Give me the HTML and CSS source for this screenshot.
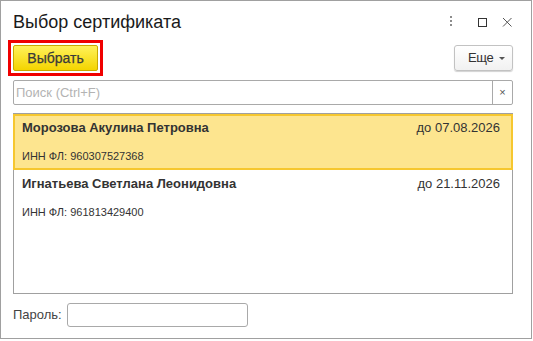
FILE: index.html
```html
<!DOCTYPE html>
<html lang="ru">
<head>
<meta charset="utf-8">
<title>Выбор сертификата</title>
<link rel="stylesheet" href="styles.css">
</head>
<body>
<div class="window">
  <div class="header">
    <h1 class="title">Выбор сертификата</h1>
    <div class="win-controls">
      <svg class="ic ic-dots" width="12" height="12" viewBox="0 0 12 12"><rect x="5" y="0" width="2" height="2" fill="#8c8c8c"/><rect x="5" y="4" width="2" height="2" fill="#8c8c8c"/><rect x="5" y="8" width="2" height="2" fill="#8c8c8c"/></svg>
      <svg class="ic ic-max" width="12" height="12" viewBox="0 0 12 12"><rect x="2.5" y="2.5" width="8" height="8" fill="none" stroke="#333" stroke-width="1"/></svg>
      <svg class="ic ic-close" width="12" height="12" viewBox="0 0 12 12"><path d="M2 2 L10.5 10.5 M10.5 2 L2 10.5" stroke="#555" stroke-width="1" fill="none"/></svg>
    </div>
  </div>
  <div class="toolbar">
    <div class="highlight"><button class="btn-primary">Выбрать</button></div>
    <button class="btn-more"><span class="more-text">Еще</span><span class="caret"></span></button>
  </div>
  <div class="search">
    <span class="search-input">Поиск (Ctrl+F)</span>
    <span class="search-clear">×</span>
  </div>
  <div class="list">
    <div class="row selected">
      <div class="row-top"><span class="name">Морозова Акулина Петровна</span><span class="date">до 07.08.2026</span></div>
      <div class="inn">ИНН ФЛ: 960307527368</div>
    </div>
    <div class="row">
      <div class="row-top"><span class="name">Игнатьева Светлана Леонидовна</span><span class="date">до 21.11.2026</span></div>
      <div class="inn">ИНН ФЛ: 961813429400</div>
    </div>
  </div>
  <div class="password">
    <span class="pw-label">Пароль:</span>
    <span class="pw-input"></span>
  </div>
</div>
</body>
</html>
```
FILE: styles.css
```css
* { box-sizing: border-box; }
html, body { margin: 0; padding: 0; background: #fff; }
body { font-family: "Liberation Sans", Arial, sans-serif; color: #333; }

.window {
  width: 532px;
  height: 339px;
  border: 1px solid #a0a0a0;
  padding: 11px 18px 0 12px;
  display: flex;
  flex-direction: column;
  background: #fff;
}

.header {
  display: flex;
  align-items: center;
  height: 20px;
}
.title {
  margin: 0;
  font-size: 18px;
  line-height: 20px;
  font-weight: normal;
  color: #1a1a1a;
  flex: 1;
}
.win-controls { display: flex; align-items: center; }
.ic { display: block; }
.ic-max { margin-left: 19px; }
.ic-close { margin-left: 13px; }

.toolbar {
  margin-top: 8px;
  height: 36px;
  display: flex;
  align-items: center;
  justify-content: space-between;
}
.highlight {
  margin-left: -5px;
  border: 3px solid #f00000;
  padding: 2px;
  height: 36px;
}
.btn-primary {
  display: block;
  width: 85px;
  height: 26px;
  border: 1px solid #c9aa00;
  border-radius: 2px;
  background: linear-gradient(#fff25a, #f4d400);
  font-family: "Liberation Sans", Arial, sans-serif;
  font-size: 14px;
  color: #3a3a3a;
  padding: 0;
  -webkit-text-stroke: 0.25px #3a3a3a;
}
.btn-more {
  width: 59px;
  height: 26px;
  border: 1px solid #c2c2c2;
  border-radius: 3px;
  background: linear-gradient(#ffffff, #f1f1f1);
  box-shadow: 0 1px 1px rgba(0,0,0,0.18);
  font-family: "Liberation Sans", Arial, sans-serif;
  font-size: 13px;
  letter-spacing: -0.4px;
  color: #333;
  padding: 0 0 0 13px;
  display: flex;
  align-items: center;
}
.more-text { line-height: 16px; }
.caret {
  margin-left: 6px;
  width: 0; height: 0;
  border-left: 3px solid transparent;
  border-right: 3px solid transparent;
  border-top: 3px solid #555;
}

.search {
  margin-top: 4px;
  height: 25px;
  border: 1px solid #a9a9a9;
  border-radius: 2px;
  display: flex;
}
.search-input {
  flex: 1;
  font-size: 13px;
  line-height: 23px;
  color: #b3b3b3;
  padding-left: 2px;
}
.search-clear {
  width: 20px;
  border-left: 1px solid #a9a9a9;
  text-align: center;
  font-size: 11px;
  line-height: 22px;
  color: #555;
}

.list {
  margin-top: 8px;
  height: 181px;
  border: 1px solid #a0a0a0;
}
.row {
  margin: 0 -1px;
  height: 56px;
  border: 2px solid transparent;
  padding: 4px 11px 0 7px;
}
.row.selected {
  background: #fde58f;
  border-color: #f6c72f;
}
.row-top {
  display: flex;
  justify-content: space-between;
  align-items: baseline;
  line-height: 16px;
}
.name {
  font-size: 13px;
  font-weight: bold;
  color: #333;
}
.date {
  font-size: 13px;
  color: #333;
}
.inn {
  margin-top: 13px;
  font-size: 11px;
  line-height: 14px;
  color: #333;
}

.password {
  margin-top: 9px;
  display: flex;
  align-items: center;
  height: 24px;
}
.pw-label {
  font-size: 13px;
  line-height: 16px;
  color: #444;
}
.pw-input {
  margin-left: 5px;
  width: 181px;
  height: 24px;
  border: 1px solid #a9a9a9;
  border-radius: 3px;
}
```
